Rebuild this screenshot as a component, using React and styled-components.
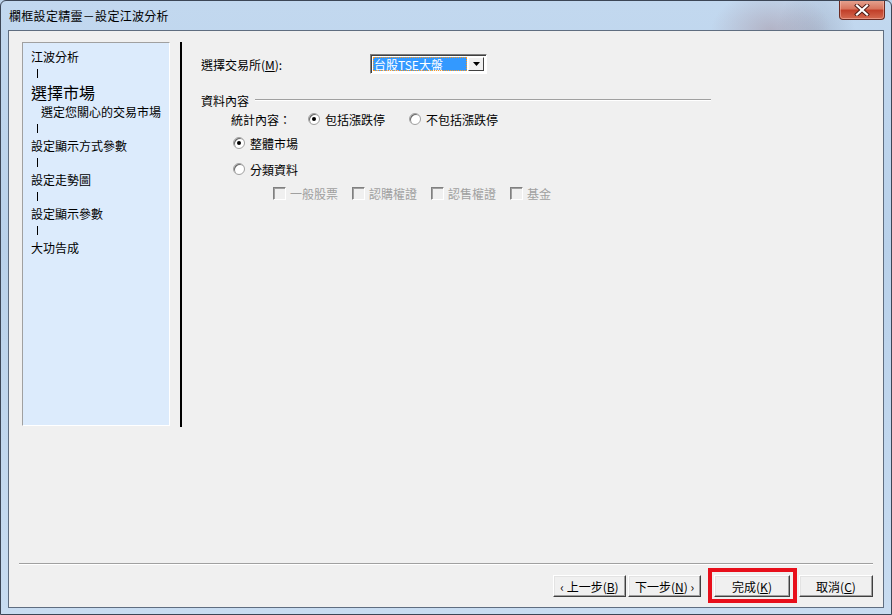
import styled, { createGlobalStyle } from 'styled-components';

const GlobalStyle = createGlobalStyle`
  html, body {
    margin: 0;
    padding: 0;
    background: #bcd3ea;
  }
  * {
    box-sizing: border-box;
  }
`;

const font = `"Noto Sans CJK TC", "Liberation Sans", sans-serif`;

const Window = styled.div`
  position: relative;
  width: 892px;
  height: 615px;
  display: flex;
  flex-direction: column;
  padding: 0 7px 6px 7px;
  border: 1px solid #3c4656;
  border-radius: 6px 6px 0 0;
  background:
    radial-gradient(ellipse 60px 40px at 770px 30px, rgba(150, 110, 120, 0.35), transparent),
    radial-gradient(ellipse 40px 60px at 815px 40px, rgba(120, 120, 140, 0.3), transparent),
    linear-gradient(180deg, #c2d8ef 0%, #b9d1ea 40%, #c8dcf1 100%);
  font-family: ${font};
  color: #000;
  overflow: hidden;
`;

const TitleBar = styled.div`
  height: 29px;
  display: flex;
  align-items: center;
  padding-left: 1px;
  font-size: 12px;
  letter-spacing: 0.3px;
`;

const CloseButton = styled.div`
  position: absolute;
  top: -1px;
  right: 6px;
  width: 46px;
  height: 20px;
  display: flex;
  align-items: center;
  justify-content: center;
  border: 1px solid #6b2b22;
  border-top: none;
  border-radius: 0 0 4px 4px;
  background: linear-gradient(180deg, #e5a593 0%, #d8765f 45%, #c2402a 55%, #d46a50 100%);
  box-shadow: inset 0 0 0 1px rgba(255, 200, 190, 0.45);
`;

const Client = styled.div`
  flex: 1;
  display: flex;
  flex-direction: column;
  background: #f0f0f0;
  border: 1px solid #5f6d80;
`;

const Body = styled.div`
  flex: 1;
  display: flex;
  padding: 11px 0 0 13px;
`;

const StepPanel = styled.div`
  width: 148px;
  height: 384px;
  background: #dcebfc;
  border-top: 1px solid #a0a0a0;
  border-left: 1px solid #a0a0a0;
  border-right: 1px solid #ffffff;
  border-bottom: 1px solid #ffffff;
  padding: 5px 0 0 8px;
  font-size: 12px;
`;

const Step = styled.div`
  height: ${(p) => (p.$big ? '21px' : '17px')};
  line-height: ${(p) => (p.$big ? '21px' : '17px')};
  font-size: ${(p) => (p.$big ? '16px' : '12px')};
  padding-left: ${(p) => p.$indent || 0}px;
  white-space: nowrap;
`;

const Connector = styled.div`
  height: 17px;
  display: flex;
  align-items: center;
  padding-left: 6px;

  &::before {
    content: '';
    width: 1px;
    height: 9px;
    background: #000;
  }
`;

const Divider = styled.div`
  width: 2px;
  height: 385px;
  margin-left: 10px;
  background: #000;
`;

const Content = styled.div`
  margin-left: 19px;
  width: 510px;
  display: flex;
  flex-direction: column;
  font-size: 12px;
`;

const FieldRow = styled.div`
  display: flex;
  align-items: center;
  margin-top: 12px;
  height: 20px;
`;

const FieldLabel = styled.span`
  width: 169px;
`;

const Combo = styled.div`
  width: 117px;
  height: 20px;
  display: flex;
  align-items: stretch;
  padding: 2px;
  border-top: 1px solid #808080;
  border-left: 1px solid #808080;
  border-right: 1px solid #ffffff;
  border-bottom: 1px solid #ffffff;
  box-shadow: inset 1px 1px 0 #404040;
  background: #ffffff;
`;

const ComboValue = styled.div`
  flex: 1;
  display: flex;
  align-items: center;
  padding-left: 1px;
  background: #3399ff;
  color: #ffffff;
  font-size: 12px;
  outline: 1px dotted #ff9a20;
  outline-offset: -1px;
  white-space: nowrap;
`;

const ComboArrow = styled.div`
  width: 16px;
  display: flex;
  align-items: center;
  justify-content: center;
  background: #f0f0f0;
  border-top: 1px solid #ffffff;
  border-left: 1px solid #ffffff;
  border-right: 1px solid #404040;
  border-bottom: 1px solid #404040;
  margin-left: 1px;
`;

const GroupHeader = styled.div`
  display: flex;
  align-items: center;
  margin-top: 19px;
  height: 14px;
`;

const GroupLine = styled.div`
  flex: 1;
  height: 2px;
  margin-left: 6px;
  border-top: 1px solid #a0a0a0;
  border-bottom: 1px solid #ffffff;
`;

const OptionRow = styled.div`
  display: flex;
  align-items: center;
  height: 16px;
  margin-top: ${(p) => p.$top}px;
  padding-left: ${(p) => p.$indent}px;
`;

const RowLabel = styled.span`
  width: 77px;
`;

const Radio = styled.span`
  position: relative;
  width: 12px;
  height: 12px;
  border-radius: 50%;
  background: #ffffff;
  border: 1px solid #a0a0a0;
  box-shadow: inset 1px 1px 0 #696969;
  margin-right: ${(p) => p.$gap || 5}px;
  flex-shrink: 0;

  &::after {
    content: '';
    display: ${(p) => (p.$checked ? 'block' : 'none')};
    position: absolute;
    left: 3px;
    top: 3px;
    width: 4px;
    height: 4px;
    border-radius: 50%;
    background: #000;
  }
`;

const RadioItem = styled.label`
  display: flex;
  align-items: center;
  width: ${(p) => (p.$width ? `${p.$width}px` : 'auto')};
`;

const CheckRow = styled.div`
  display: flex;
  align-items: center;
  gap: 14px;
  margin-top: 8px;
  padding-left: 72px;
  height: 16px;
  color: #a0a0a0;
`;

const CheckItem = styled.label`
  display: flex;
  align-items: center;
  gap: 4px;
  width: 65px;
`;

const CheckBox = styled.span`
  width: 13px;
  height: 13px;
  background: #f0f0f0;
  border-top: 1px solid #808080;
  border-left: 1px solid #808080;
  border-right: 1px solid #ffffff;
  border-bottom: 1px solid #ffffff;
  box-shadow: inset 1px 1px 0 #a0a0a0;
`;

const Footer = styled.div`
  display: flex;
  flex-direction: column;
  padding: 0 10px 10px 10px;
`;

const FooterLine = styled.div`
  height: 2px;
  border-top: 1px solid #a0a0a0;
  border-bottom: 1px solid #ffffff;
`;

const ButtonRow = styled.div`
  display: flex;
  justify-content: flex-end;
  margin-top: 10px;
`;

const Button = styled.button`
  position: relative;
  width: ${(p) => p.$width || 74}px;
  height: 22px;
  margin-left: ${(p) => p.$space || 0}px;
  padding: 0;
  font-family: ${font};
  font-size: 12px;
  color: #000;
  background: #f0f0f0;
  border-top: 1px solid #ffffff;
  border-left: 1px solid #ffffff;
  border-right: 1px solid #404040;
  border-bottom: 1px solid #404040;
  box-shadow: inset -1px -1px 0 #a0a0a0, inset 1px 1px 0 #e3e3e3;

  &::after {
    content: '';
    display: ${(p) => (p.$marked ? 'block' : 'none')};
    position: absolute;
    left: -7px;
    right: -8px;
    top: -8px;
    bottom: -7px;
    border: 4px solid #e80f1b;
  }
`;

const steps = [
  { text: '江波分析' },
  { bar: true },
  { text: '選擇市場', big: true },
  { text: '選定您關心的交易市場', indent: 10 },
  { bar: true },
  { text: '設定顯示方式參數' },
  { bar: true },
  { text: '設定走勢圖' },
  { bar: true },
  { text: '設定顯示參數' },
  { bar: true },
  { text: '大功告成' },
];

const categories = ['一般股票', '認購權證', '認售權證', '基金'];

const App = () => {
  return (
    <>
      <GlobalStyle />
      <Window>
        <TitleBar>欄框設定精靈－設定江波分析</TitleBar>
        <CloseButton>
          <svg width="16" height="12" viewBox="0 0 16 12">
            <path d="M3 1.5 L13 10.5 M13 1.5 L3 10.5" stroke="#4a1a14" strokeWidth="4" strokeLinecap="square" />
            <path d="M3 1.5 L13 10.5 M13 1.5 L3 10.5" stroke="#ffffff" strokeWidth="2.2" strokeLinecap="square" />
          </svg>
        </CloseButton>
        <Client>
          <Body>
            <StepPanel>
              {steps.map((s, i) =>
                s.bar ? (
                  <Connector key={i} />
                ) : (
                  <Step key={i} $big={s.big} $indent={s.indent}>
                    {s.text}
                  </Step>
                )
              )}
            </StepPanel>
            <Divider />
            <Content>
              <FieldRow>
                <FieldLabel>
                  選擇交易所(<u>M</u>):
                </FieldLabel>
                <Combo>
                  <ComboValue>台股TSE大盤</ComboValue>
                  <ComboArrow>
                    <svg width="7" height="4" viewBox="0 0 7 4">
                      <path d="M0 0 H7 L3.5 4 Z" fill="#000" />
                    </svg>
                  </ComboArrow>
                </Combo>
              </FieldRow>
              <GroupHeader>
                資料內容
                <GroupLine />
              </GroupHeader>
              <OptionRow $top={4} $indent={30}>
                <RowLabel>統計內容：</RowLabel>
                <RadioItem $width={101}>
                  <Radio $checked />
                  包括漲跌停
                </RadioItem>
                <RadioItem>
                  <Radio />
                  不包括漲跌停
                </RadioItem>
              </OptionRow>
              <OptionRow $top={8} $indent={32}>
                <RadioItem>
                  <Radio $checked />
                  整體市場
                </RadioItem>
              </OptionRow>
              <OptionRow $top={10} $indent={32}>
                <RadioItem>
                  <Radio />
                  分類資料
                </RadioItem>
              </OptionRow>
              <CheckRow>
                {categories.map((c) => (
                  <CheckItem key={c}>
                    <CheckBox />
                    {c}
                  </CheckItem>
                ))}
              </CheckRow>
            </Content>
          </Body>
          <Footer>
            <FooterLine />
            <ButtonRow>
              <Button $width={73}>‹ 上一步(<u>B</u>)</Button>
              <Button $width={73} $space={2}>下一步(<u>N</u>) ›</Button>
              <Button $width={76} $space={13} $marked>完成(<u>K</u>)</Button>
              <Button $width={74} $space={9}>取消(<u>C</u>)</Button>
            </ButtonRow>
          </Footer>
        </Client>
      </Window>
    </>
  );
};

export default App;
